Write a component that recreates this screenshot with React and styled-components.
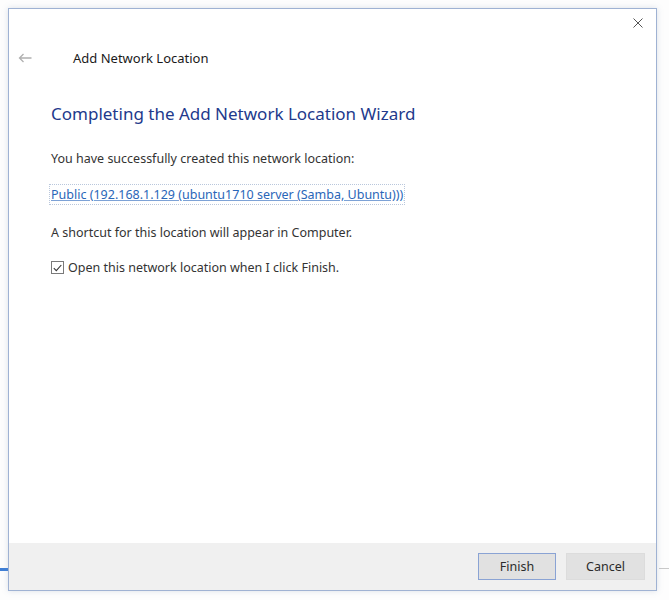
import React, { useState } from "react";
import styled, { createGlobalStyle } from "styled-components";

// Add Network Location wizard, final page

const GlobalStyle = createGlobalStyle`
  html, body {
    margin: 0;
    padding: 0;
    background: #ffffff;
    font-family: "Noto Sans", "Open Sans", sans-serif;
  }
`;

const Desktop = styled.div`
  position: relative;
  width: 669px;
  height: 600px;
  padding: 8px 0 0 8px;
  box-sizing: border-box;
  background: #fdfdfd;
`;

const TaskStripe = styled.div`
  position: absolute;
  top: 568px;
  height: ${(p) => p.thick}px;
  background: ${(p) => p.color};
  ${(p) => (p.side === "left" ? "left: 0; width: 8px;" : "right: 0; width: 10px;")}
`;

const Window = styled.div`
  position: relative;
  width: 649px;
  height: 583px;
  box-sizing: border-box;
  border: 1px solid #9fb2d3;
  background: #ffffff;
  box-shadow: 0 0 6px rgba(120, 140, 170, 0.25);
  display: flex;
  flex-direction: column;
`;

const TitleBar = styled.div`
  height: 30px;
  display: flex;
  justify-content: flex-end;
  align-items: center;
  padding: 0 6px 0 0;
`;

const CloseButton = styled.button`
  width: 24px;
  height: 24px;
  margin-top: -2px;
  border: none;
  background: transparent;
  padding: 0;
  display: flex;
  align-items: center;
  justify-content: center;
  cursor: pointer;
`;

const Header = styled.div`
  display: flex;
  align-items: center;
  height: 38px;
  padding-left: 7px;
`;

const BackButton = styled.button`
  width: 18px;
  height: 18px;
  border: none;
  background: transparent;
  padding: 0;
  display: flex;
  align-items: center;
  justify-content: center;
  margin-right: 39px;
`;

const Caption = styled.span`
  font-size: 13px;
  color: #1a1a1a;
`;

const Body = styled.div`
  flex: 1;
  padding: 0 0 0 42px;
  display: flex;
  flex-direction: column;
`;

const Heading = styled.h1`
  margin: 25px 0 0;
  font-size: 17px;
  font-weight: 400;
  color: #22398c;
`;

const Text = styled.p`
  margin: ${(p) => p.top}px 0 0;
  font-size: 12.5px;
  color: #333333;
`;

const Link = styled.a`
  display: inline-block;
  margin-top: 19px;
  font-size: 12.5px;
  color: #2a66b8;
  text-decoration: underline;
  text-decoration-color: #7da2d6;
  outline: 1px dotted #b9c7dc;
  outline-offset: 1px;
  align-self: flex-start;
  cursor: pointer;
`;

const CheckRow = styled.label`
  display: flex;
  align-items: center;
  gap: 4px;
  margin-top: 18px;
  font-size: 12.5px;
  color: #333333;
  cursor: default;
`;

const Box = styled.span`
  width: 13px;
  height: 13px;
  box-sizing: border-box;
  border: 1px solid #7a7a7a;
  background: #ffffff;
  display: flex;
  align-items: center;
  justify-content: center;
`;

const Footer = styled.div`
  height: 47px;
  background: #f0f0f0;
  display: flex;
  justify-content: flex-end;
  align-items: center;
  gap: 10px;
  padding-right: 11px;
`;

const Button = styled.button`
  width: ${(p) => p.w}px;
  height: 27px;
  box-sizing: border-box;
  border: 1px solid ${(p) => (p.primary ? "#8aa3d4" : "#dcdcdc")};
  background: #e1e1e1;
  font-family: inherit;
  font-size: 12.5px;
  color: #2b2b2b;
  padding: 0;
`;

export default function App() {
  const [checked, setChecked] = useState(true);
  return (
    <>
      <GlobalStyle />
      <Desktop>
        <TaskStripe side="left" color="#3f7fd6" thick={3} />
        <TaskStripe side="right" color="#c9c9c9" thick={1} />
        <Window>
          <TitleBar>
            <CloseButton aria-label="Close">
              <svg width="10" height="10" viewBox="0 0 10 10">
                <path d="M0.5 0.5 L9.5 9.5 M9.5 0.5 L0.5 9.5" stroke="#555" strokeWidth="1" />
              </svg>
            </CloseButton>
          </TitleBar>
          <Header>
            <BackButton aria-label="Back">
              <svg width="14" height="10" viewBox="0 0 14 10">
                <path d="M13.5 5 H1.5 M5.5 1 L1.5 5 L5.5 9" stroke="#b0b0b0" strokeWidth="1.3" fill="none" />
              </svg>
            </BackButton>
            <Caption>Add Network Location</Caption>
          </Header>
          <Body>
            <Heading>Completing the Add Network Location Wizard</Heading>
            <Text top={25}>You have successfully created this network location:</Text>
            <Link>Public (192.168.1.129 (ubuntu1710 server (Samba, Ubuntu)))</Link>
            <Text top={21}>A shortcut for this location will appear in Computer.</Text>
            <CheckRow onClick={() => setChecked(!checked)}>
              <Box>
                {checked && (
                  <svg width="9" height="8" viewBox="0 0 9 8">
                    <path d="M0.8 4.2 L3.3 6.6 L8.3 1" stroke="#333" strokeWidth="1.1" fill="none" />
                  </svg>
                )}
              </Box>
              Open this network location when I click Finish.
            </CheckRow>
          </Body>
          <Footer>
            <Button primary w={78}>Finish</Button>
            <Button w={79}>Cancel</Button>
          </Footer>
        </Window>
      </Desktop>
    </>
  );
}
